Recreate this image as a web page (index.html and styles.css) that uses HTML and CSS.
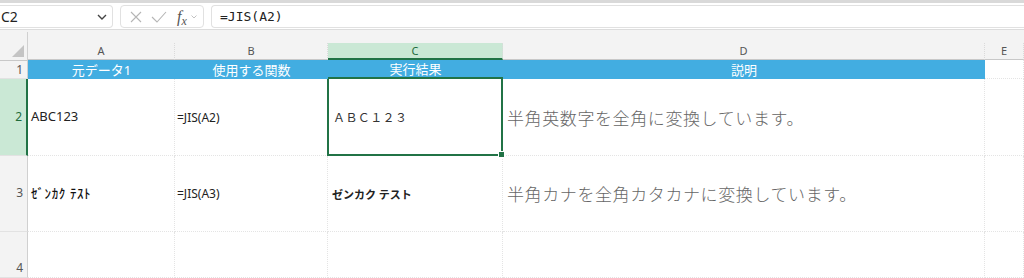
FILE: index.html
```html
<!DOCTYPE html>
<html lang="ja">
<head>
  <meta charset="UTF-8">
  <title>JIS関数</title>
  <link rel="stylesheet" href="styles.css">
</head>
<body>
  <div class="topline"></div>
  <div class="formula-bar">
    <div class="name-box">
      <span>C2</span>
      <svg class="chev" width="10" height="6" viewBox="0 0 10 6"><path d="M1 1 L5 5 L9 1" fill="none" stroke="#444" stroke-width="1.4"/></svg>
    </div>
    <div class="fx-box">
      <svg width="14" height="14" viewBox="0 0 14 14"><path d="M2 2 L12 12 M12 2 L2 12" stroke="#b5b5b5" stroke-width="1.1"/></svg>
      <svg width="16" height="14" viewBox="0 0 16 14"><path d="M1 7 L6 12 L15 2" fill="none" stroke="#b5b5b5" stroke-width="1.1"/></svg>
      <span class="fx">f<span class="fx-x">x</span></span>
      <svg width="6" height="4" viewBox="0 0 6 4"><path d="M0.5 0.5 L3 3 L5.5 0.5" fill="none" stroke="#bbb" stroke-width="0.9"/></svg>
    </div>
    <div class="formula-input">=JIS(A2)</div>
  </div>
  <div class="gap"></div>

  <div class="sheet">
    <div class="corner"><span class="tri"></span></div>
    <div class="col-head">A</div>
    <div class="col-head">B</div>
    <div class="col-head active">C</div>
    <div class="col-head">D</div>
    <div class="col-head">E</div>

    <div class="row-head r1">1</div>
    <div class="cell title">元データ1</div>
    <div class="cell title">使用する関数</div>
    <div class="cell title sel-top">実行結果</div>
    <div class="cell title">説明</div>
    <div class="cell"></div>

    <div class="row-head active r2">2</div>
    <div class="cell val">ABC123</div>
    <div class="cell fn">=JIS(A2)</div>
    <div class="cell wide selected">ＡＢＣ１２３<span class="handle"></span></div>
    <div class="cell desc">半角英数字を全角に変換しています。</div>
    <div class="cell"></div>

    <div class="row-head r3">3</div>
    <div class="cell half">ｾﾞﾝｶｸ ﾃｽﾄ</div>
    <div class="cell fn">=JIS(A3)</div>
    <div class="cell kana">ゼンカク テスト</div>
    <div class="cell desc">半角カナを全角カタカナに変換しています。</div>
    <div class="cell"></div>

    <div class="row-head r4">4</div>
    <div class="cell"></div>
    <div class="cell"></div>
    <div class="cell"></div>
    <div class="cell"></div>
    <div class="cell"></div>
  </div>
</body>
</html>
```

FILE: styles.css
```css
body {
  margin: 0;
  width: 1024px;
  height: 278px;
  overflow: hidden;
  background: #ffffff;
  font-family: 'Noto Sans', 'Noto Sans CJK JP', sans-serif;
  color: #222;
}
.topline {
  height: 3px;
  background: #d9d9d9;
}
.formula-bar {
  display: flex;
  align-items: center;
  height: 25px;
  padding-top: 1px;
  background: #ffffff;
  border-bottom: 1px solid #dcdcdc;
}
.name-box {
  box-sizing: border-box;
  width: 113px;
  height: 23px;
  display: flex;
  align-items: center;
  justify-content: space-between;
  padding: 0 5px 0 1px;
  border: 1px solid #e1e1e1;
  border-left: none;
  border-radius: 0 4px 4px 0;
  font-size: 14px;
  color: #222;
}
.fx-box {
  box-sizing: border-box;
  width: 84px;
  height: 23px;
  margin-left: 7px;
  display: flex;
  align-items: center;
  gap: 8px;
  padding-left: 8px;
  border: 1px solid #e1e1e1;
  border-radius: 4px;
}
.fx {
  font-family: 'Liberation Serif', serif;
  font-style: italic;
  font-size: 16px;
  color: #555;
  margin-left: 2px;
  margin-right: -4px;
}
.fx-x {
  font-size: 12px;
  position: relative;
  top: 3px;
}
.formula-input {
  box-sizing: border-box;
  flex: 1;
  height: 23px;
  margin-left: 7px;
  padding-left: 8px;
  border: 1px solid #e1e1e1;
  border-right: none;
  border-radius: 4px 0 0 4px;
  font-family: 'DejaVu Sans Mono', monospace;
  font-size: 13px;
  line-height: 21px;
  color: #222;
}
.gap {
  height: 13px;
  background: #f3f3f3;
}
.sheet {
  display: grid;
  grid-template-columns: 28px 147px 153px 175px 482px 1fr;
  grid-template-rows: 17px 19px 77px 76px 46px;
  background: #ffffff;
}
.corner {
  background: #f3f3f3;
  border-right: 1px solid #d0d0d0;
  border-bottom: 1px solid #c8c8c8;
  margin-top: -11px;
  height: 28px;
  position: relative;
}
.tri {
  position: absolute;
  right: 3px;
  bottom: 3px;
  width: 0;
  height: 0;
  border-left: 12px solid transparent;
  border-bottom: 12px solid #c4c4c4;
}
.col-head {
  background: #f3f3f3;
  border-right: 1px dotted #dadada;
  border-bottom: 1px solid #c8c8c8;
  text-align: center;
  font-size: 11px;
  line-height: 16px;
  color: #555;
}
.col-head.active {
  background: #cae8d5;
  color: #1e6b3c;
  border-bottom: 2px solid #217346;
}
.row-head {
  background: #f3f3f3;
  border-right: 1px solid #d0d0d0;
  border-bottom: 1px solid #e2e2e2;
  font-size: 12px;
  color: #555;
  padding-right: 4px;
  display: flex;
  align-items: center;
  justify-content: flex-end;
}
.row-head.r2,
.row-head.r3 {
  padding-bottom: 2px;
}
.row-head.r4 {
  align-items: flex-end;
  padding-bottom: 1px;
}
.row-head.active {
  background: #cae8d5;
  color: #1e6b3c;
  border-right: 2px solid #217346;
}
.cell {
  border-right: 1px dotted #e4e4e4;
  border-bottom: 1px dotted #e4e4e4;
  display: flex;
  align-items: center;
  padding-left: 3px;
  font-size: 13px;
  white-space: nowrap;
}
.cell.title {
  background: #42ade1;
  color: #ffffff;
  justify-content: center;
  padding-left: 0;
  font-size: 13px;
  border-right: none;
  border-bottom: 1px solid #42ade1;
}
.cell.sel-top {
  border-bottom: 2px solid #217346;
}
.cell.val {
  font-size: 13px;
  color: #222;
  padding-bottom: 2px;
}
.cell.fn {
  font-size: 12px;
  padding-left: 2px;
}
.cell.wide {
  font-size: 12px;
  letter-spacing: 0.4px;
  color: #333;
}
.cell.selected {
  box-sizing: border-box;
  border: 2px solid #217346;
  border-top: none;
  margin-left: -1px;
  position: relative;
  padding-left: 4px;
}
.handle {
  position: absolute;
  right: -4px;
  bottom: -4px;
  width: 5px;
  height: 5px;
  background: #217346;
  border: 1px solid #ffffff;
}
.cell.half {
  font-size: 13px;
  font-weight: 500;
  color: #111;
  letter-spacing: 0.6px;
  padding-bottom: 2px;
}
.cell.kana {
  font-size: 11px;
  font-weight: bold;
  padding-left: 4px;
}
.cell.desc {
  font-size: 17px;
  font-weight: 300;
  color: #666;
  padding-left: 4px;
  letter-spacing: 0.6px;
}
```
